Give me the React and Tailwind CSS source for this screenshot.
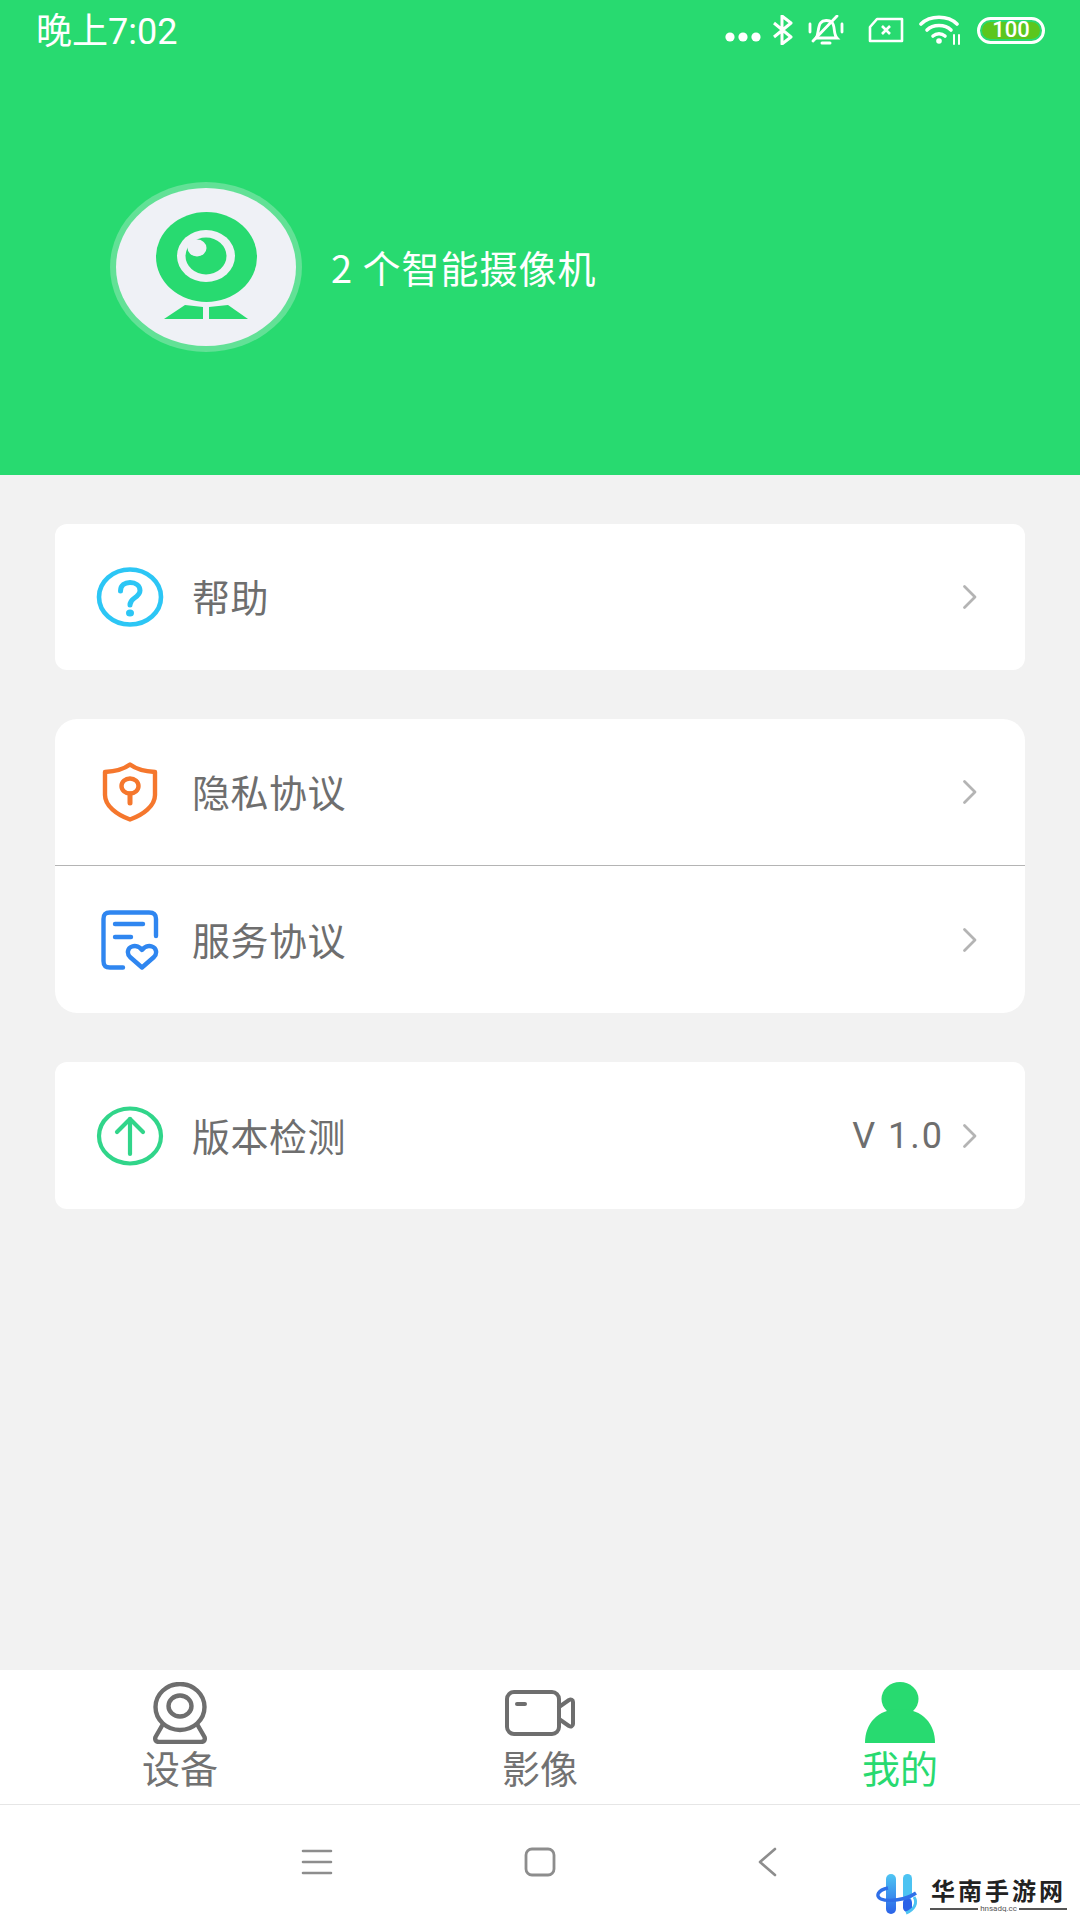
import React from "react";

function Chevron() {
  return (
    <svg width="16" height="26" viewBox="0 0 16 26" fill="none" stroke="#b4b4b4" strokeWidth="2.8" strokeLinecap="round" strokeLinejoin="round">
      <path d="M2.5 2.5 L13 13 L2.5 23.5" />
    </svg>
  );
}

function HelpIcon() {
  return (
    <svg width="68" height="60" viewBox="0 0 68 60" fill="none">
      <ellipse cx="34" cy="30" rx="31" ry="27.5" stroke="#2cc6f5" strokeWidth="4.6" />
      <path d="M24.5 24 C24.5 18 29 15.5 34 15.5 C39.5 15.5 44 18.5 44 23.5 C44 27 41.5 29 38.5 31 C35.5 33 34 34.5 34 38" stroke="#2cc6f5" strokeWidth="5" strokeLinecap="round" />
      <ellipse cx="34" cy="46" rx="4" ry="3.6" fill="#2cc6f5" />
    </svg>
  );
}

function ShieldIcon() {
  return (
    <svg width="56" height="60" viewBox="0 0 56 60" fill="none" stroke="#f5772d" strokeWidth="4.4" strokeLinejoin="round" strokeLinecap="round">
      <path d="M28 2.5 C22 7 12 9.5 3 10 L3 33 C3 44 15 53 28 57.5 C41 53 53 44 53 33 L53 10 C44 9.5 34 7 28 2.5 Z" />
      <ellipse cx="28" cy="24" rx="8.5" ry="7.5" />
      <path d="M28 32 L28 41" strokeWidth="5" />
    </svg>
  );
}

function DocIcon() {
  return (
    <svg width="58" height="60" viewBox="0 0 58 60" fill="none" stroke="#2f86f0" strokeWidth="4.4" strokeLinecap="round" strokeLinejoin="round">
      <path d="M55 26 L55 9 C55 4.5 53 2.5 48 2.5 L9 2.5 C4.5 2.5 2.5 4.5 2.5 9 L2.5 51 C2.5 56 4.5 57.5 9 57.5 L22 57.5" />
      <path d="M14 14 L42 14" />
      <path d="M14 27 L30 27" />
      <path d="M41 57.5 L29 47 C25.5 43.5 26.5 38 31 36.5 C35 35.2 39 37 41 40 C43 37 47 35.2 51 36.5 C55.5 38 56.5 43.5 53 47 Z" />
    </svg>
  );
}

function UpIcon() {
  return (
    <svg width="68" height="60" viewBox="0 0 68 60" fill="none" stroke="#31d58a" strokeWidth="4.2" strokeLinecap="round" strokeLinejoin="round">
      <ellipse cx="34" cy="30" rx="31" ry="27.5" />
      <path d="M34 13 L34 48" />
      <path d="M21 26 L34 13 L47 26" />
    </svg>
  );
}

function Logo() {
  return (
    <svg width="192" height="170" viewBox="0 0 192 170">
      <ellipse cx="96" cy="85" rx="96" ry="85" fill="#62e196" />
      <ellipse cx="96" cy="85" rx="90" ry="79" fill="#eff1f6" />
      <ellipse cx="96.5" cy="75" rx="50.5" ry="45" fill="#28da70" />
      <ellipse cx="96" cy="74" rx="29" ry="26" fill="#eff1f6" />
      <ellipse cx="96" cy="74" rx="20.5" ry="18.5" fill="#28da70" />
      <ellipse cx="87" cy="66" rx="9.5" ry="8.5" fill="#eff1f6" />
      <path d="M93 125 L75 123 L54 137 L93 137 Z" fill="#28da70" />
      <path d="M99 125 L118 123 L138 137 L99 137 Z" fill="#28da70" />
    </svg>
  );
}

function StatusIcons() {
  return (
    <div className="flex items-center">
      <svg width="36" height="12" viewBox="0 0 36 12" fill="#fff" className="mt-[14px]">
        <circle cx="5" cy="6" r="4.6" />
        <circle cx="18" cy="6" r="4.6" />
        <circle cx="31" cy="6" r="4.6" />
      </svg>
      <svg width="22" height="30" viewBox="0 0 22 30" fill="none" stroke="#fff" strokeWidth="3" className="ml-[11px]">
        <path d="M2 8 L19 22 L10 29 L10 1 L19 8 L2 22" strokeLinejoin="round" />
      </svg>
      <svg width="36" height="30" viewBox="0 0 36 30" fill="none" stroke="#fff" strokeWidth="2.8" strokeLinecap="round" className="ml-[14px]">
        <path d="M8 23 C11 19 9.5 12 12.5 8 C15 5 21 4.5 24 7.5 C27.5 11 25 19 29 23 Z" />
        <path d="M14 28 L22 28" strokeWidth="3" />
        <path d="M5 26 L29 1" />
        <path d="M2 9 L2 17 M34 9 L34 17" />
      </svg>
      <svg width="36" height="26" viewBox="0 0 36 26" fill="none" stroke="#fff" strokeWidth="2.6" strokeLinejoin="round" className="ml-[24px]">
        <path d="M9 2 L34 2 L34 24 L2 24 L2 10 Z" />
        <path d="M14 9 L22 17 M22 9 L14 17" />
      </svg>
      <svg width="44" height="30" viewBox="0 0 44 30" fill="none" stroke="#fff" strokeWidth="3.6" strokeLinecap="round" className="ml-[15px]">
        <path d="M2 9 C11 0 29 0 38 9" />
        <path d="M8 15 C14 9 26 9 32 15" />
        <path d="M14 21 C17.5 18 22.5 18 26 21" />
        <circle cx="20" cy="26" r="2.8" fill="#fff" stroke="none" />
        <path d="M35 20 L35 29 M40 20 L40 29" strokeWidth="2" />
      </svg>
      <div className="ml-[14px] flex h-[27px] w-[68px] items-center justify-center rounded-full border-[3px] border-white p-[2px]">
        <div className="flex h-full w-full items-center justify-center rounded-full bg-[#5cc61e] text-[22px] leading-none font-medium text-white font-['Roboto',sans-serif]">
          100
        </div>
      </div>
    </div>
  );
}

function Row({ icon, label, value, tall }) {
  return (
    <div className={`flex items-center pl-[41px] pr-[47px] ${tall ? "h-[147px]" : "h-[146px]"}`}>
      <div className="flex w-[68px] justify-center">{icon}</div>
      <span className="mb-[2px] ml-[28px] text-[38px] leading-none tracking-[0.5px] text-[#6e6e6e]">{label}</span>
      <div className="flex-1" />
      {value && <span className="mr-[18px] text-[36px] leading-none tracking-[2px] text-[#6e6e6e] font-['Roboto',sans-serif]">{value}</span>}
      <Chevron />
    </div>
  );
}

function Tab({ icon, label, active }) {
  return (
    <div className="flex flex-1 flex-col items-center pt-[12px]">
      <div className="flex h-[62px] items-center justify-center">{icon}</div>
      <span className={`mt-[4px] text-[38px] leading-[38px] ${active ? "text-[#28da70]" : "text-[#727272]"}`}>{label}</span>
    </div>
  );
}

export default function App() {
  return (
    <div className="relative flex h-[1920px] w-[1080px] flex-col overflow-hidden bg-[#f2f2f2] font-['Noto_Sans_CJK_SC','Noto_Sans',sans-serif]">
      <div className="h-[475px] bg-[#28da70]">
        <div className="flex h-[60px] items-center justify-between pl-[36px] pr-[35px]">
          <span className="mt-[3px] text-[36px] leading-none text-white font-['Roboto','Noto_Sans_CJK_SC',sans-serif]">晚上7:02</span>
          <StatusIcons />
        </div>
        <div className="mt-[122px] flex items-center pl-[110px]">
          <Logo />
          <span className="ml-[29px] text-[38px] leading-none tracking-[1px] text-white">2 个智能摄像机</span>
        </div>
      </div>

      <div className="flex flex-1 flex-col gap-[49px] px-[55px] pt-[49px]">
        <div className="rounded-[12px] bg-white">
          <Row icon={<HelpIcon />} label="帮助" />
        </div>
        <div className="rounded-[22px] bg-white">
          <Row icon={<ShieldIcon />} label="隐私协议" />
          <div className="h-px bg-[#b4b4b4]" />
          <Row tall icon={<DocIcon />} label="服务协议" />
        </div>
        <div className="rounded-[12px] bg-white">
          <Row tall icon={<UpIcon />} label="版本检测" value="V 1.0" />
        </div>
      </div>

      <div className="flex h-[134px] bg-white">
        <Tab
          label="设备"
          icon={
            <svg width="54" height="62" viewBox="0 0 54 62" fill="none" stroke="#6e6e6e" strokeWidth="4.4" strokeLinejoin="round">
              <ellipse cx="27" cy="25" rx="24.5" ry="23" />
              <ellipse cx="27" cy="24" rx="11.5" ry="10.5" />
              <path d="M10 42 L2.5 55 C1.5 58 3 60 6 60 L48 60 C51 60 52.5 58 51.5 55 L44 42" />
            </svg>
          }
        />
        <Tab
          label="影像"
          icon={
            <svg width="70" height="46" viewBox="0 0 70 46" fill="none" stroke="#6e6e6e" strokeWidth="4" strokeLinejoin="round" strokeLinecap="round">
              <rect x="2" y="2" width="52" height="42" rx="7" />
              <path d="M12 14 L20 14" />
              <path d="M54 17 L64 10 C66 9 68 10 68 12 L68 34 C68 36 66 37 64 36 L54 29" />
            </svg>
          }
        />
        <Tab
          active
          label="我的"
          icon={
            <svg width="70" height="62" viewBox="0 0 70 62" fill="#28da70">
              <ellipse cx="35" cy="17" rx="18.5" ry="17" />
              <path d="M0 61 C0 42 12 27 35 27 C58 27 70 42 70 61 Z" />
            </svg>
          }
        />
      </div>

      <div className="h-px bg-[#e6e6e6]" />

      <div className="flex h-[115px] items-center bg-white pb-[2px] pl-[301px]">
        <svg width="32" height="28" viewBox="0 0 32 28" stroke="#8d8d8d" strokeWidth="2.6" strokeLinecap="round">
          <path d="M2 3 L30 3 M2 14 L30 14 M2 25 L30 25" />
        </svg>
        <svg width="32" height="30" viewBox="0 0 32 30" fill="none" stroke="#8d8d8d" strokeWidth="2.8" className="ml-[191px]">
          <rect x="2" y="2" width="28" height="26" rx="6" />
        </svg>
        <svg width="20" height="30" viewBox="0 0 20 30" fill="none" stroke="#8d8d8d" strokeWidth="2.6" strokeLinecap="round" strokeLinejoin="round" className="ml-[201px]">
          <path d="M18 2 L3 15 L18 28" />
        </svg>
      </div>

      {/* watermark sits over the nav bar */}
      <div className="absolute right-[13px] bottom-[5px] flex items-center">
        <svg width="44" height="42" viewBox="0 0 44 42" fill="none">
          <defs>
            <linearGradient id="wmBar" x1="0" y1="0" x2="0" y2="1">
              <stop offset="0" stopColor="#4fc6f3" />
              <stop offset="1" stopColor="#2a62e8" />
            </linearGradient>
          </defs>
          <rect x="10" y="1" width="10" height="40" rx="5" fill="url(#wmBar)" />
          <rect x="27" y="1" width="9" height="26" rx="4.5" fill="#4cc3f2" />
          <rect x="27" y="25" width="9" height="14" rx="4.5" fill="#2a62e8" />
          <path d="M12 15 C2 17 -1 23 5 26 C12 29 30 27 40 20" stroke="#2f6fe8" strokeWidth="3.4" />
          <path d="M38 24 C42 30 38 37 30 40" stroke="#4cc3f2" strokeWidth="3" />
        </svg>
        <div className="ml-[10px] flex flex-col items-center">
          <span className="text-[24px] leading-[30px] font-bold tracking-[3px] text-[#222222]">华南手游网</span>
          <div className="flex items-center">
            <div className="h-[1.5px] w-[48px] bg-[#555555]" />
            <span className="mx-[2px] text-[8px] leading-[8px] text-[#555555] font-['Roboto',sans-serif]">hnsadq.cc</span>
            <div className="h-[1.5px] w-[48px] bg-[#555555]" />
          </div>
        </div>
      </div>
    </div>
  );
}
